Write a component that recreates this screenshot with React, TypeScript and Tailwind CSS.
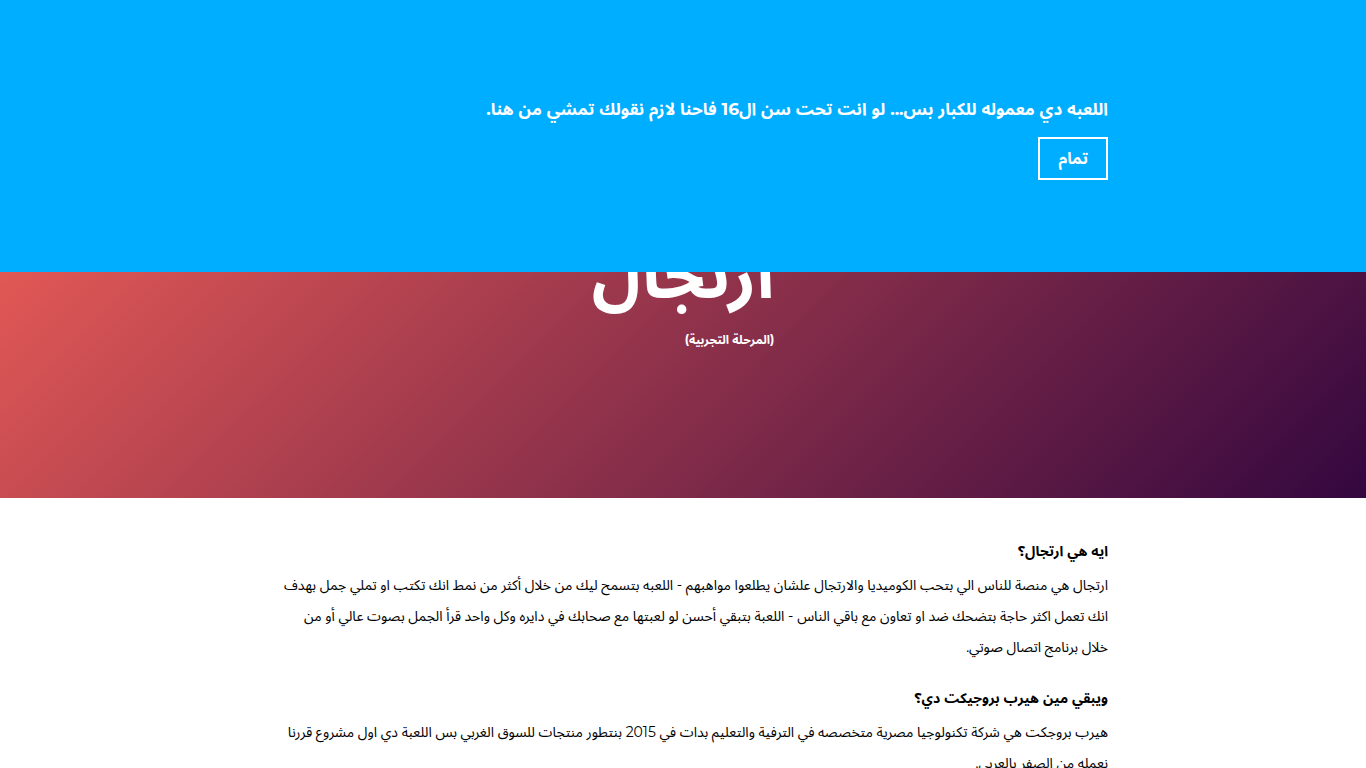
import React from "react";

const sections = [
  {
    title: "ايه هي ارتجال؟",
    body: "ارتجال هي منصة للناس الي بتحب الكوميديا والارتجال علشان يطلعوا مواهبهم - اللعبه بتسمح ليك من خلال أكثر من نمط انك تكتب او تملي جمل بهدف انك تعمل اكثر حاجة بتضحك ضد او تعاون مع باقي الناس - اللعبة بتبقي أحسن لو لعبتها مع صحابك في دايره وكل واحد قرأ الجمل بصوت عالي أو من خلال برنامج اتصال صوتي.",
  },
  {
    title: "ويبقي مين هيرب بروجيكت دي؟",
    body: "هيرب بروجكت هي شركة تكنولوجيا مصرية متخصصه في الترفية والتعليم بدات في 2015 بنتطور منتجات للسوق الغربي بس اللعبة دي اول مشروع قررنا نعمله من الصفر بالعربي.",
  },
];

function AgeNotice() {
  return (
    <aside className="fixed inset-x-0 top-0 z-10 bg-[#00aeff] px-6 pt-[94px] pb-[92px] text-white">
      <div className="mx-auto flex max-w-[850px] flex-col items-start gap-3">
        <p className="text-[17px] leading-[31px] font-bold">
          اللعبه دي معموله للكبار بس... لو انت تحت سن ال16 فاحنا لازم نقولك تمشي من هنا.
        </p>
        <button type="button" className="h-[43px] border-2 border-white px-[18px] text-base font-bold">
          تمام
        </button>
      </div>
    </aside>
  );
}

export default function App() {
  return (
    <div dir="rtl" lang="ar" className="h-screen overflow-hidden bg-white font-['Montserrat','Noto_Sans_Arabic','Noto_Sans',sans-serif] text-black">
      <AgeNotice />
      <header className="flex h-[498px] justify-center bg-[linear-gradient(135deg,#ff6659,#33073f)] pt-[222px] text-white">
        <div>
          <h1 className="text-[67px] leading-[104px] font-bold">ارتجال</h1>
          <p className="text-xs leading-7 font-bold">(المرحلة التجربية)</p>
        </div>
      </header>
      <main className="mx-auto max-w-[850px] pt-[38px]">
        {sections.map((s) => (
          <section key={s.title} className="mb-5">
            <h2 className="mb-[3px] text-sm leading-[31px] font-bold">{s.title}</h2>
            <p className="max-w-[830px] text-sm leading-[31px]">{s.body}</p>
          </section>
        ))}
      </main>
    </div>
  );
}
